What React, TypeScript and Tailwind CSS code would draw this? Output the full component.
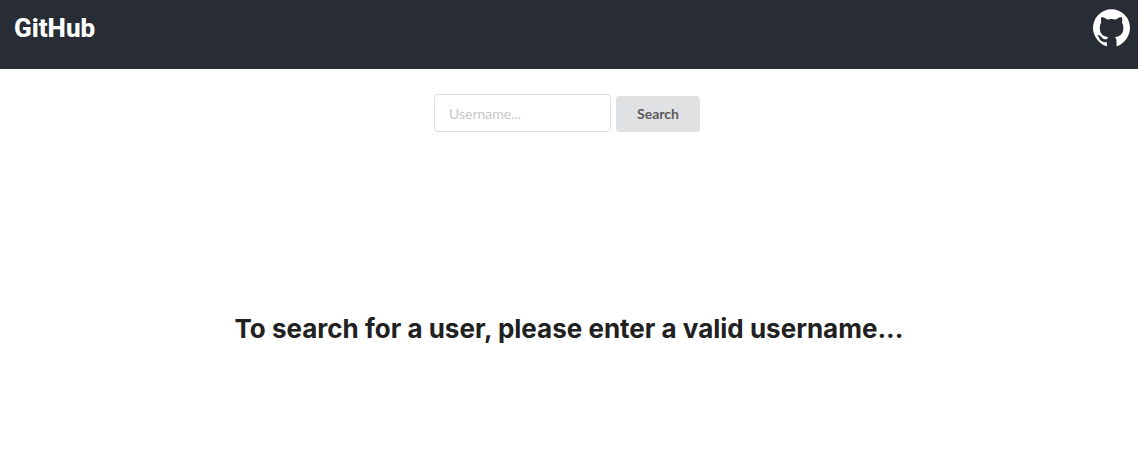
import { useState } from "react";

function GitHubMark() {
  return (
    <svg viewBox="0 0 37 38" className="h-[38px] w-[37px]" aria-hidden="true">
      <path
        className="fill-white"
        d="M18.5 .3A18.5 18.5 0 0 0 0 18.8C0 27 5.3 33.9 12.6 37.100q1.200.4 1.300-.5V32.900C9.300 33.900 7.500 31.700 6.600 30 6.100 28.500 5.500 27.500 4.700 26.800 4.300 26.300 4.600 26 5.200 26 7 26.200 8.100 27.500 8.900 28.500 10.200 30.200 12 30.700 14.100 30.100 14.300 29.200 14.700 28.700 15.300 28.200 10 27.500 6.800 24.800 6.800 19 6.800 16.800 7.300 15 8.300 13.500 7.700 12 7.800 10 8.500 8 10.500 8 12.500 9.200 14 10.400Q18.500 9.500 23.200 10.400C24.700 9.200 26.700 8 28.700 8 29.400 10 29.500 12 28.900 13.500 29.900 15 30.400 16.800 30.400 19 30.400 24.800 27.200 27.500 21.900 28.200 23 29.200 23.500 30.200 23.500 31.700V36.600q.1.900 1.300.5C31.800 33.900 37 27 37 18.800A18.500 18.500 0 0 0 18.500.3z"
      />
    </svg>
  );
}

export default function App() {
  const [username, setUsername] = useState("");

  return (
    <div className="min-h-screen bg-white">
      <header className="flex h-[69px] items-start justify-between bg-[#282c34] pr-2 pl-3.5 text-white">
        <a
          href="/"
          className="pt-3 font-[Roboto,sans-serif] text-[26px] leading-8 font-extrabold"
        >
          GitHub
        </a>
        <a href="https://github.com" aria-label="GitHub profile" className="pt-[9px]">
          <GitHubMark />
        </a>
      </header>
      <main className="flex flex-col items-center">
        <form
          className="mt-[25px] mr-1 flex items-end gap-[5px] font-[Lato,sans-serif] text-sm"
          onSubmit={(event) => event.preventDefault()}
        >
          <input
            type="text"
            aria-label="Username"
            placeholder="Username..."
            value={username}
            onChange={(event) => setUsername(event.target.value)}
            className="h-[38px] w-[177px] rounded border border-[#dededf] bg-white px-3.5 text-black/85 outline-none placeholder:text-[#c7c7c7] focus:border-[#85b7d9]"
          />
          <button
            type="submit"
            className="h-9 w-[84px] rounded bg-[#e0e1e2] font-bold text-[#5a5a5a] hover:bg-[#cacbcd]"
          >
            Search
          </button>
        </form>
        <h1 className="mt-[179px] px-4 text-center font-[Inter,sans-serif] text-[26px] leading-9 font-bold text-[#212121]">
          To search for a user, please enter a valid username...
        </h1>
      </main>
    </div>
  );
}
